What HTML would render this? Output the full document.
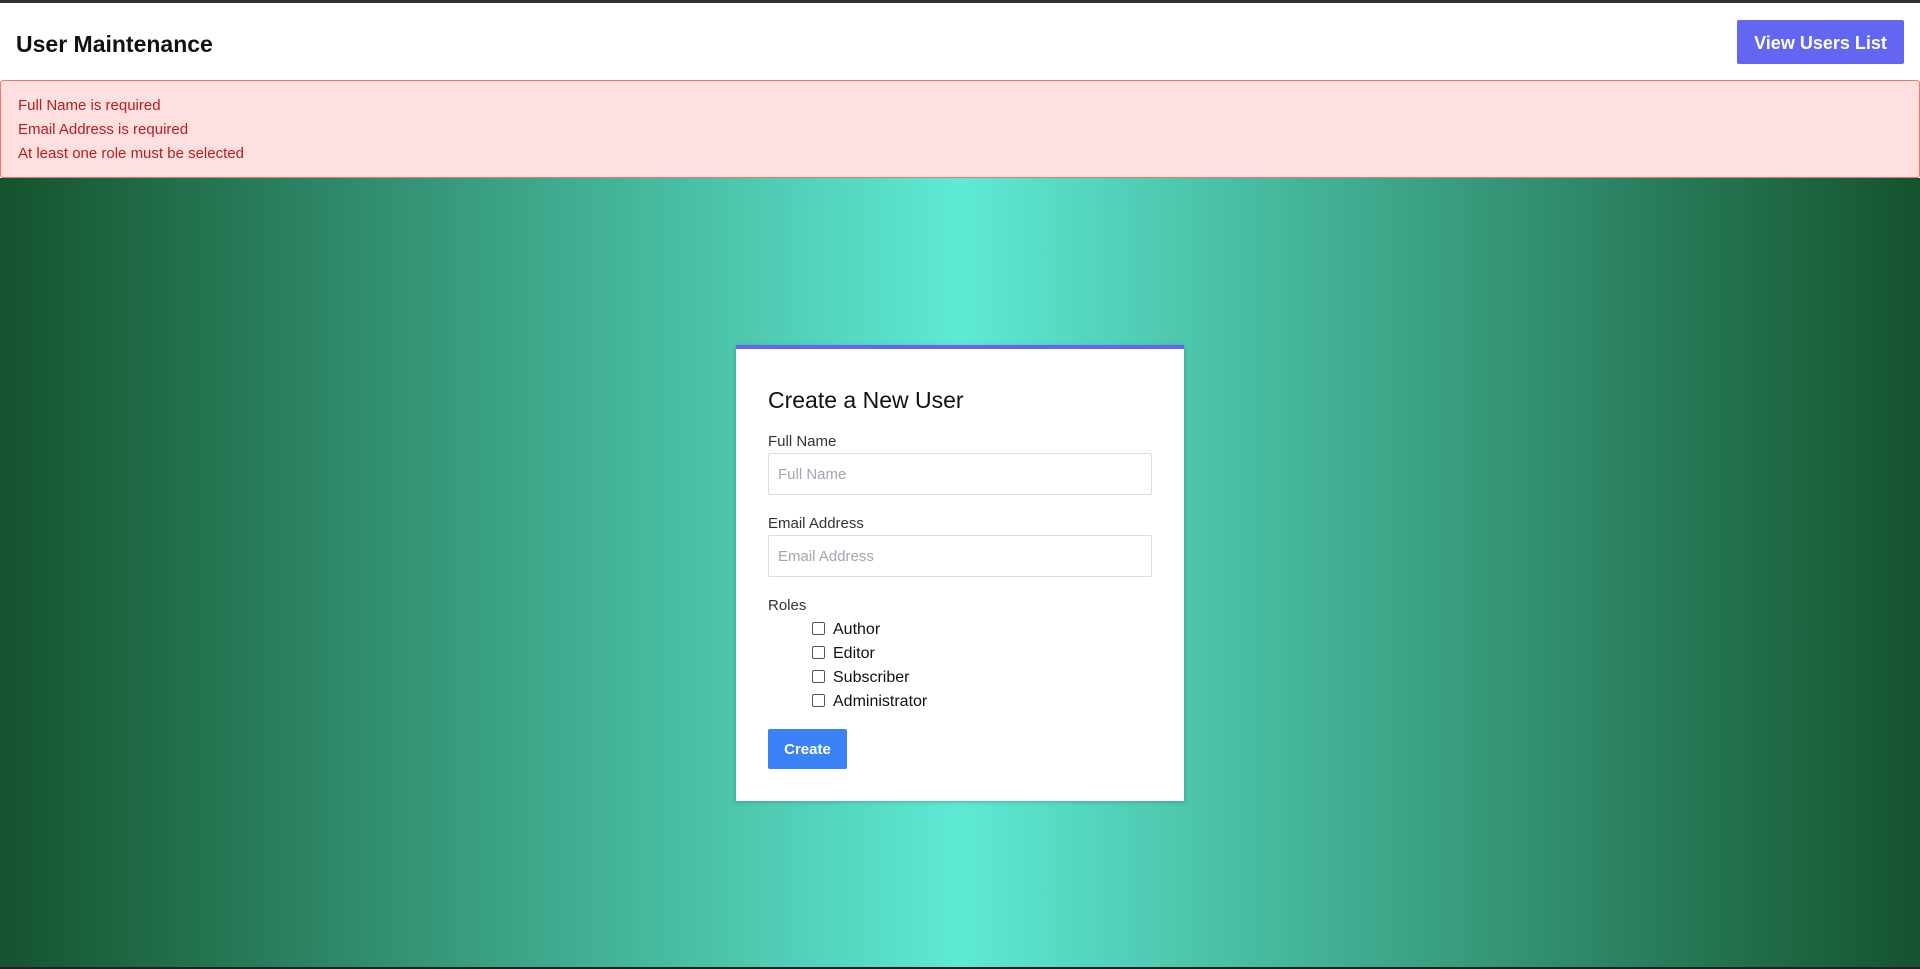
<!DOCTYPE html>
<html><head><meta charset="utf-8"><style>
*{box-sizing:border-box;margin:0;padding:0}
body{width:1920px;height:969px;overflow:hidden;font-family:"Liberation Sans",sans-serif;background:#fff;position:relative}
.abs{position:absolute}
#topbar{left:0;top:0;width:1920px;height:3px;background:#333}
h1{position:absolute;left:16px;top:30px;font-size:23px;font-weight:bold;color:#111;line-height:28px}
#vbtn{left:1737px;top:20px;width:167px;height:44px;background:#6366f1;color:#fff;border-radius:2px;font-size:18px;font-weight:bold;text-align:center;line-height:46px}
#alert{left:0;top:80px;width:1920px;height:98px;background:#fee0e1;border:1px solid #f87171;border-radius:3px;color:#b91c1c;font-size:15px;padding:13px 0 0 17px;line-height:24px}
#bg{left:0;top:178px;width:1920px;height:789px;background:linear-gradient(90deg,#14532d 0%,#5eead4 50%,#14532d 100%)}
#bot{left:0;top:967px;width:1920px;height:2px;background:#222}
#card{left:736px;top:345px;width:448px;height:456px;background:#fff;border-top:4px solid #6366f1;box-shadow:0 1px 4px rgba(0,0,0,.2)}
.t{position:absolute;color:#111}
.lbl{font-size:15px;color:#333}
.inp{position:absolute;left:768px;width:384px;height:42px;border:1px solid #ddd;border-radius:2px;background:#fff;color:#a0a7b1;font-size:15px;padding-left:9px;line-height:42px}
.cb{position:absolute;left:812px;width:13px;height:13px;border:1px solid #555;border-radius:2px;background:#fff}
.cl{position:absolute;left:833px;font-size:16px;color:#111}
#create{left:768px;top:729px;width:79px;height:40px;background:#3b82f6;color:#fff;border-radius:2px;font-weight:bold;font-size:15px;text-align:center;line-height:42px}
</style></head><body>
<div id="topbar" class="abs"></div>
<h1>User Maintenance</h1>
<div id="vbtn" class="abs">View Users List</div>
<div id="alert" class="abs">Full Name is required<br>Email Address is required<br>At least one role must be selected</div>
<div id="bg" class="abs"></div>
<div id="bot" class="abs"></div>
<div id="card" class="abs"></div>
<div class="t" style="left:768px;top:386px;font-size:23px;line-height:28px">Create a New User</div>
<div class="t lbl" style="left:768px;top:433px">Full Name</div>
<div class="inp" style="top:453px">Full Name</div>
<div class="t lbl" style="left:768px;top:515px">Email Address</div>
<div class="inp" style="top:535px">Email Address</div>
<div class="t lbl" style="left:768px;top:597px">Roles</div>
<div class="cb" style="top:622px"></div><div class="cl" style="top:621px">Author</div>
<div class="cb" style="top:646px"></div><div class="cl" style="top:645px">Editor</div>
<div class="cb" style="top:670px"></div><div class="cl" style="top:669px">Subscriber</div>
<div class="cb" style="top:694px"></div><div class="cl" style="top:693px">Administrator</div>
<div id="create" class="abs">Create</div>
</body></html>
